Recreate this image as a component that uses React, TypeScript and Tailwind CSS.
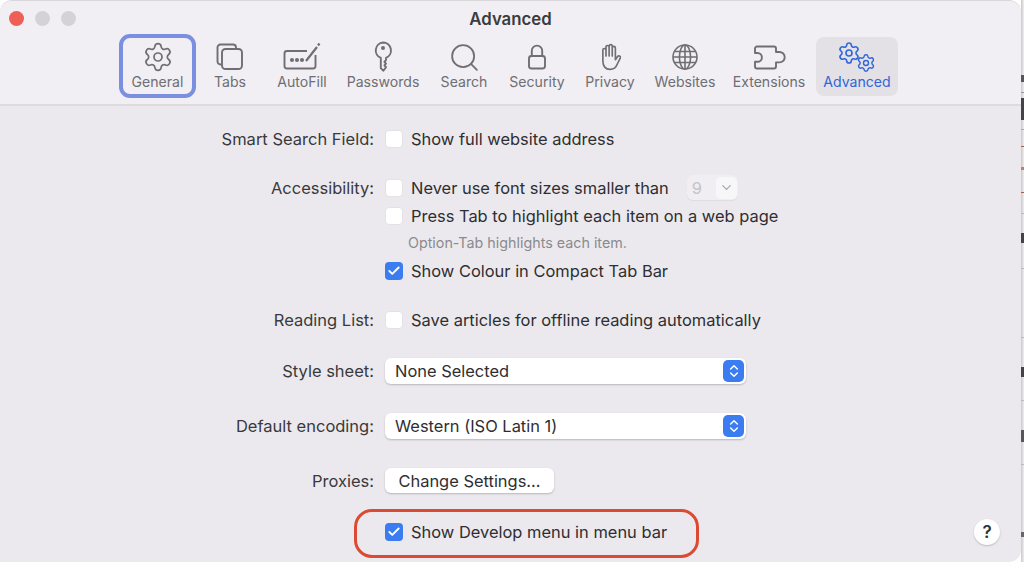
import React from "react";
import { Search, Settings, ChevronDown, ChevronsUpDown, Check } from "lucide-react";

const font = "font-['Inter','Liberation_Sans',sans-serif]";

function TabsIcon() {
  return (
    <svg width="30" height="30" viewBox="0 0 30 30" fill="none" stroke="currentColor" strokeWidth="1.9">
      <path d="M6 22.5 H5.5 a3 3 0 0 1 -3 -3 V5.5 a3 3 0 0 1 3 -3 H18 a3 3 0 0 1 3 3 V7" />
      <rect x="7" y="7" width="20" height="20" rx="3.5" />
    </svg>
  );
}

function AutoFillIcon() {
  return (
    <svg width="40" height="30" viewBox="0 0 40 30" fill="none" stroke="currentColor" strokeWidth="1.9">
      <path d="M25 9 H5 a2.5 2.5 0 0 0 -2.5 2.5 V24 a2.5 2.5 0 0 0 2.5 2.5 H31 a2.5 2.5 0 0 0 2.5 -2.5 V13" />
      <circle cx="10" cy="18" r="1.1" fill="currentColor" />
      <circle cx="15" cy="18" r="1.1" fill="currentColor" />
      <circle cx="20" cy="18" r="1.1" fill="currentColor" />
      <path d="M24 19 L35 5 M36 3.5 L37.5 1.5" strokeWidth="2.2" />
    </svg>
  );
}

function KeyIcon() {
  return (
    <svg width="20" height="32" viewBox="0 0 20 32" fill="none" stroke="currentColor" strokeWidth="1.9">
      <path d="M10 1.5 a8 8 0 0 1 3 15.4 V19 l-1.6 1.8 1.6 1.8 -1.6 1.8 1.6 1.8 -2.6 3.6 -2.6 -2.6 V16.9 A8 8 0 0 1 10 1.5 Z" strokeLinejoin="round" />
      <circle cx="10" cy="7" r="2" fill="currentColor" stroke="none" />
    </svg>
  );
}

function LockIcon() {
  return (
    <svg width="20" height="26" viewBox="0 0 20 26" fill="none" stroke="currentColor" strokeWidth="1.9">
      <rect x="2" y="12" width="16" height="12.5" rx="2.5" />
      <path d="M4.8 12 V6.8 a5.2 5.2 0 0 1 10.4 0 V12" />
    </svg>
  );
}

function HandIcon() {
  return (
    <svg width="23" height="30" viewBox="0 0 25 30" fill="none" stroke="currentColor" strokeWidth="1.8" strokeLinecap="round" strokeLinejoin="round">
      <path d="M4.2 19 V7.5 a1.7 1.7 0 0 1 3.4 0 V14 M7.6 14 V4.2 a1.7 1.7 0 0 1 3.4 0 V14 M11 14 V3.2 a1.7 1.7 0 0 1 3.4 0 V14 M14.4 14 V5.2 a1.7 1.7 0 0 1 3.4 0 V18 l2.4 -3.6 a1.7 1.7 0 0 1 2.9 1.7 l-3.2 6.5 C18.5 26.5 16 28.5 12 28.5 C7 28.5 4.2 25 4.2 19" />
    </svg>
  );
}

function GlobeIcon() {
  return (
    <svg width="28" height="28" viewBox="0 0 28 28" fill="none" stroke="currentColor" strokeWidth="1.6">
      <circle cx="14" cy="14" r="12" />
      <ellipse cx="14" cy="14" rx="5.6" ry="12" />
      <path d="M14 2 V26 M2 14 H26 M3.6 8.5 H24.4 M3.6 19.5 H24.4" />
    </svg>
  );
}

function PuzzleIcon() {
  return (
    <svg width="33" height="25" viewBox="0 0 33 25" fill="none" stroke="currentColor" strokeWidth="1.9" strokeLinejoin="round">
      <path d="M4 1.5 H21 a2 2 0 0 1 2 2 V7 h3.5 a5 5 0 0 1 0 10.4 H23 V21.5 a2 2 0 0 1 -2 2 H4 a2 2 0 0 1 -2 -2 V16.8 H4.5 a4.4 4.4 0 0 0 0 -8.8 H2 V3.5 a2 2 0 0 1 2 -2 Z" />
    </svg>
  );
}

function AdvancedIcon() {
  return (
    <div className="relative w-[40px] h-[30px]">
      <Settings size={24} strokeWidth={1.6} className="absolute left-0 top-[1px]" />
      <Settings size={20} strokeWidth={1.7} className="absolute left-[19px] top-[13px]" />
    </div>
  );
}

const tools = [
  { label: "General", width: "w-[77px]", icon: <Settings size={32} strokeWidth={1.3} /> },
  { label: "Tabs", width: "w-[68px]", icon: <TabsIcon /> },
  { label: "AutoFill", width: "w-[76px]", icon: <AutoFillIcon /> },
  { label: "Passwords", width: "w-[86px]", icon: <KeyIcon /> },
  { label: "Search", width: "w-[76px]", icon: <Search size={33} strokeWidth={1.3} /> },
  { label: "Security", width: "w-[70px]", icon: <LockIcon /> },
  { label: "Privacy", width: "w-[76px]", icon: <HandIcon /> },
  { label: "Websites", width: "w-[74px]", icon: <GlobeIcon /> },
  { label: "Extensions", width: "w-[94px]", icon: <PuzzleIcon /> },
];

// what shows of the page behind the window, in the strip at the right edge
const behind = [
  "top-[75px] h-[7px] bg-[#55555a]",
  "top-[92px] h-[1px] bg-[#999999]",
  "top-[98px] h-[22px] bg-[#444448]",
  "top-[129px] h-[1px] bg-[#aaaaaa]",
  "top-[146px] h-[1px] bg-[#b5544c]",
  "top-[167px] h-[3px] bg-[#c07c78]",
  "top-[192px] h-[1px] bg-[#b5544c]",
  "top-[213px] h-[1px] bg-[#bbbbbb]",
  "top-[233px] h-[10px] bg-[#444448]",
  "top-[268px] h-[1px] bg-[#bbbbbb]",
  "top-[337px] h-[1px] bg-[#bbbbbb]",
  "top-[367px] h-[10px] bg-[#444448]",
  "top-[400px] h-[1px] bg-[#bbbbbb]",
  "top-[430px] h-[12px] bg-[#55555a]",
  "top-[464px] h-[1px] bg-[#bbbbbb]",
  "top-[532px] h-[5px] bg-[#66666a]",
];

function ToolItem({ label, width, icon }: { label: string; width: string; icon: React.ReactNode }) {
  return (
    <div className={`${width} h-[64px] flex flex-col items-center text-[#6f6e72]`}>
      <div className="h-[39px] pt-[7px] flex items-center justify-center">{icon}</div>
      <span className="text-[14.1px] leading-[18px]">{label}</span>
    </div>
  );
}

function Checkbox({ checked }: { checked?: boolean }) {
  if (checked) {
    return (
      <span className="w-[18px] h-[18px] rounded-[4px] bg-[#3b7cf0] flex items-center justify-center shrink-0">
        <Check size={14} strokeWidth={3.2} className="text-white" />
      </span>
    );
  }
  return <span className="w-[18px] h-[18px] rounded-[4px] bg-white border border-[#e2e1e4] shrink-0" />;
}

function Row({ label, className, children }: { label?: string; className?: string; children: React.ReactNode }) {
  return (
    <div className={`flex items-center ${className ?? ""}`}>
      <div className="w-[374px] text-right text-[16.5px] text-[#3a393c] shrink-0">{label}</div>
      <div className="ml-[11px] flex items-center">{children}</div>
    </div>
  );
}

function Option({ checked, children }: { checked?: boolean; children: React.ReactNode }) {
  return (
    <>
      <Checkbox checked={checked} />
      <span className="ml-[8px] whitespace-nowrap">{children}</span>
    </>
  );
}

function SelectBox({ value }: { value: string }) {
  return (
    <div className="w-[361px] h-[26px] rounded-[6px] bg-white shadow-[0_1px_2px_rgba(0,0,0,0.22)] flex items-center justify-between pl-[10px] pr-[2px]">
      <span>{value}</span>
      <span className="w-[21px] h-[22px] rounded-[5px] bg-[#3b7cf0] flex items-center justify-center">
        <ChevronsUpDown size={16} strokeWidth={2.2} className="text-white" />
      </span>
    </div>
  );
}

export default function App() {
  return (
    <div className={`${font} w-[1024px] h-[562px] bg-white overflow-hidden flex relative text-[16.45px] leading-[20px] text-[#2f2e31]`}>
      <div className="w-[1021px] h-[562px] flex flex-col bg-[#ebe9ed] rounded-t-[12px] rounded-br-[12px] border-t border-[#d8d7da] relative shrink-0">
        {/* toolbar */}
        <div className="h-[105px] bg-[#f1eff3] border-b-2 border-[#dcdbde] rounded-t-[12px] relative shrink-0">
          <div className="absolute left-[9px] top-[10px] flex gap-[11px]">
            <span className="w-[15px] h-[15px] rounded-full bg-[#ed5f57]" />
            <span className="w-[15px] h-[15px] rounded-full bg-[#d3d2d5]" />
            <span className="w-[15px] h-[15px] rounded-full bg-[#d3d2d5]" />
          </div>
          <div className="text-center text-[16.8px] font-semibold text-[#3c3b3e] pt-[8px] leading-[20px]">Advanced</div>
          <div className="flex pl-[119px] mt-[5px]">
            <div className="relative">
              <span className="absolute inset-0 rounded-[11px] border-[4px] border-[#7b8fe0]" />
              <ToolItem {...tools[0]} />
            </div>
            {tools.slice(1).map((t) => (
              <ToolItem key={t.label} {...t} />
            ))}
            <div className="w-[82px] h-[59px] mt-[3px] rounded-[8px] bg-[#e3e1e5] flex flex-col items-center text-[#2f66d9]">
              <div className="h-[36px] flex items-center justify-center"><AdvancedIcon /></div>
              <span className="text-[14.1px] leading-[18px]">Advanced</span>
            </div>
          </div>
        </div>

        {/* form */}
        <div className="flex-1 flex flex-col pt-[23px]">
          <Row label="Smart Search Field:"><Option>Show full website address</Option></Row>
          <Row label="Accessibility:" className="mt-[26px]">
            <Option>Never use font sizes smaller than</Option>
            <div className="ml-[18px] w-[51px] h-[25px] rounded-[6px] bg-[#f0eef2] flex items-center justify-between pl-[5px] pr-[1px] shadow-[0_1px_1px_rgba(0,0,0,0.06)]">
              <span className="text-[#c4c3c6]">9</span>
              <span className="w-[21px] h-[22px] rounded-[5px] bg-[#f7f6f8] flex items-center justify-center">
                <ChevronDown size={15} strokeWidth={2} className="text-[#a9a8ab]" />
              </span>
            </div>
          </Row>
          <Row className="mt-[6px]"><Option>Press Tab to highlight each item on a web page</Option></Row>
          <Row className="mt-[7px]"><span className="ml-[23px] text-[14.3px] text-[#8b8a8d]">Option-Tab highlights each item.</span></Row>
          <Row className="mt-[8px]"><Option checked>Show Colour in Compact Tab Bar</Option></Row>
          <Row label="Reading List:" className="mt-[29px]"><Option>Save articles for offline reading automatically</Option></Row>
          <Row label="Style sheet:" className="mt-[28px]"><SelectBox value="None Selected" /></Row>
          <Row label="Default encoding:" className="mt-[29px]"><SelectBox value="Western (ISO Latin 1)" /></Row>
          <Row label="Proxies:" className="mt-[29px]">
            <div className="w-[169px] h-[25px] rounded-[6px] bg-white shadow-[0_1px_2px_rgba(0,0,0,0.22)] flex items-center justify-center whitespace-nowrap">Change Settings...</div>
          </Row>
          <Row className="mt-[29px]"><Option checked>Show Develop menu in menu bar</Option></Row>
        </div>

        {/* callout round the last row */}
        <span className="absolute left-[354px] top-[508px] w-[345px] h-[49px] rounded-[18px] border-[3px] border-[#dc4a34]" />
        {/* help button */}
        <span className="absolute left-[974px] top-[518px] w-[26px] h-[26px] rounded-full bg-white shadow-[0_1px_2px_rgba(0,0,0,0.2)] flex items-center justify-center text-[17px] font-semibold text-[#333]">?</span>
      </div>
      <div className="relative w-[3px] h-[562px] bg-gradient-to-r from-[#c9c9cb] to-[#eeeeee]">
        {behind.map((c) => (
          <span key={c} className={`absolute left-0 w-[3px] ${c}`} />
        ))}
      </div>
    </div>
  );
}
